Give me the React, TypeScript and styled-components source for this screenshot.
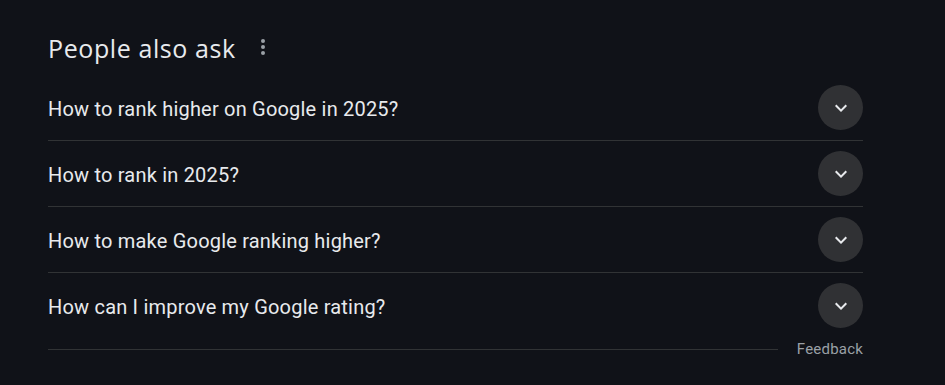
import styled, { createGlobalStyle } from "styled-components";

const GlobalStyle = createGlobalStyle`
    html, body {
        margin: 0;
        padding: 0;
        background: #101218;
    }
    body {
        font-family: Roboto, "Liberation Sans", Arial, sans-serif;
        color: #e8eaed;
    }
`

const Page = styled.div`
    width: 945px;
    height: 385px;
    box-sizing: border-box;
    padding: 32px 0 0 48px;
`

const Section = styled.div`
    width: 815px;
    display: flex;
    flex-direction: column;
`

const Header = styled.div`
    display: flex;
    align-items: flex-start;
    gap: 15px;
    height: 43px;
`

const Title = styled.div`
    font-family: "Open Sans", Roboto, sans-serif;
    font-size: 25px;
    line-height: 32px;
    font-weight: 400;
    color: #e8eaed;
    letter-spacing: 0.6px;
`

const MenuButton = styled.div`
    display: flex;
    align-items: center;
    justify-content: center;
    width: 24px;
    height: 24px;
    margin-top: 3px;
    color: #9aa0a6;
`

const List = styled.div`
    display: flex;
    flex-direction: column;
`

const Row = styled.div<{$last?: boolean}>`
    display: flex;
    align-items: center;
    justify-content: space-between;
    height: 65px;
    border-bottom: ${({$last})=>$last ? "none" : "1px solid #313335"};
    cursor: pointer;
`

const Question = styled.div`
    font-size: 20px;
    line-height: 26px;
    letter-spacing: 0.2px;
    color: #e8eaed;
    padding-top: 3px;
`

const ExpandButton = styled.div`
    display: flex;
    align-items: center;
    justify-content: center;
    width: 45px;
    height: 45px;
    border-radius: 50%;
    background: #303134;
    color: #e8eaed;
    flex-shrink: 0;
`

const Footer = styled.div`
    display: flex;
    align-items: center;
    gap: 19px;
    height: 20px;
    margin-top: 1px;
`

const FooterLine = styled.div`
    flex-grow: 1;
    height: 1px;
    background: #313335;
`

const FeedbackLink = styled.div`
    font-size: 15px;
    line-height: 20px;
    letter-spacing: 0.2px;
    color: #9aa0a6;
    cursor: pointer;
`

const questions = [
    "How to rank higher on Google in 2025?",
    "How to rank in 2025?",
    "How to make Google ranking higher?",
    "How can I improve my Google rating?",
]

const MoreVert = () => (
    <svg width="24" height="24" viewBox="0 0 24 24" fill="currentColor">
        <circle cx="12" cy="6" r="2"/>
        <circle cx="12" cy="12" r="2"/>
        <circle cx="12" cy="18" r="2"/>
    </svg>
)

const ExpandMore = () => (
    <svg width="24" height="24" viewBox="0 0 24 24" fill="currentColor">
        <path d="M16.59 8.59 12 13.17 7.41 8.59 6 10l6 6 6-6z"/>
    </svg>
)

export default function App() {
    return (
        <Page>
            <GlobalStyle/>
            <Section>
                <Header>
                    <Title>People also ask</Title>
                    <MenuButton><MoreVert/></MenuButton>
                </Header>
                <List>
                    {questions.map((q, i) => (
                        <Row key={q} $last={i === questions.length - 1}>
                            <Question>{q}</Question>
                            <ExpandButton><ExpandMore/></ExpandButton>
                        </Row>
                    ))}
                </List>
                <Footer>
                    <FooterLine/>
                    <FeedbackLink>Feedback</FeedbackLink>
                </Footer>
            </Section>
        </Page>
    )
}
